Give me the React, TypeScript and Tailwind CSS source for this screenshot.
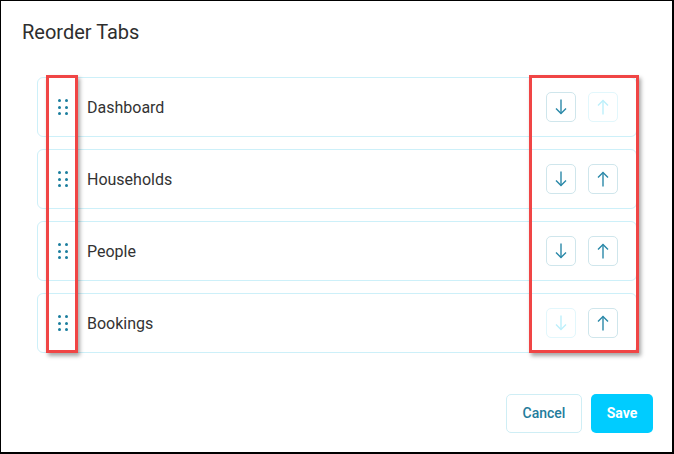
import React from "react"

const tabs = ["Dashboard", "Households", "People", "Bookings"]

function Arrow({ up, disabled }: { up?: boolean; disabled?: boolean }) {
  return (
    <button
      className={`w-[30px] h-[30px] rounded-[5px] border flex items-center justify-center ${
        disabled ? "border-[#e2f7fc] text-[#bdeffb]" : "border-[#cfe6ec] text-[#2a88a8]"
      }`}
    >
      <svg width="16" height="18" viewBox="0 0 16 18" fill="none" stroke="currentColor" strokeWidth="1.4">
        {up ? (
          <>
            <path d="M8 16.5V2.5" />
            <path d="M3 7.5L8 2.5L13 7.5" />
          </>
        ) : (
          <>
            <path d="M8 1.5v14" />
            <path d="M3 10.5L8 15.5L13 10.5" />
          </>
        )}
      </svg>
    </button>
  )
}

function DragHandle() {
  return (
    <div className="grid grid-cols-2 gap-x-[4px] gap-y-[3.5px]">
      {Array.from({ length: 6 }).map((_, i) => (
        <span key={i} className="w-[3px] h-[3px] rounded-full bg-[#1b7e9e]" />
      ))}
    </div>
  )
}

export default function App() {
  return (
    <div
      className="relative w-[674px] h-[454px] bg-white border-black border-t border-l border-r-2 border-b-2 overflow-hidden"
      style={{ fontFamily: "Roboto, 'Liberation Sans', sans-serif" }}
    >
      <h1 className="pl-[21px] pt-[18px] text-[20px] leading-[26px] text-[#2e2e2e]">Reorder Tabs</h1>

      {/* Tab rows */}
      <div className="ml-[36px] mt-[32px] w-[600px] flex flex-col gap-[12px]">
        {tabs.map((t, i) => (
          <div
            key={t}
            className="h-[60px] rounded-[6px] border border-[#cdf0f9] flex items-center pl-[20px] pr-[18px]"
          >
            <DragHandle />
            <span className="ml-[19px] pt-[2px] text-[16px] text-[#333333]">{t}</span>
            <div className="ml-auto flex gap-[12px]">
              <Arrow disabled={i === tabs.length - 1} />
              <Arrow up disabled={i === 0} />
            </div>
          </div>
        ))}
      </div>

      {/* Footer */}
      <div className="flex justify-end gap-[9px] pr-[19px] mt-[41px]">
        <button className="w-[76px] h-[39px] rounded-[5px] border border-[#cfeef5] text-[#1f7c9c] text-[14px] font-medium">
          Cancel
        </button>
        <button className="w-[62px] h-[39px] rounded-[5px] bg-[#00ccff] text-white text-[14px] font-bold">
          Save
        </button>
      </div>

      {/* Annotation boxes */}
      <div className="absolute left-[45px] top-[74px] w-[32px] h-[278px] border-[3px] border-[#f04545] shadow-[2px_3px_4px_rgba(0,0,0,0.35)]" />
      <div className="absolute left-[528px] top-[74px] w-[110px] h-[278px] border-[3px] border-[#f04545] shadow-[2px_3px_4px_rgba(0,0,0,0.35)]" />
    </div>
  )
}
